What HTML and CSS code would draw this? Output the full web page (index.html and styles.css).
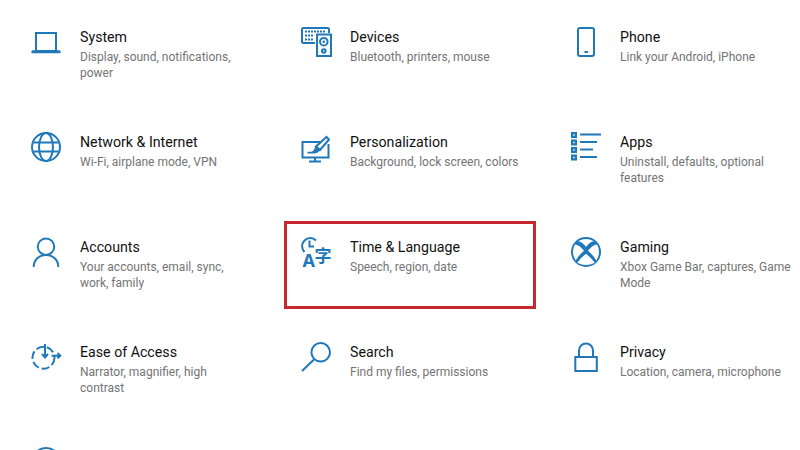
FILE: index.html
```html
<!DOCTYPE html>
<html lang="en">
<head>
<meta charset="utf-8">
<title>Windows Settings</title>
<link rel="stylesheet" href="styles.css">
</head>
<body>
<main class="grid">
  <section class="tile">
    <svg class="icon" viewBox="0 0 30 30"><rect class="s" x="5" y="6" width="20" height="18"/><path class="s thick" d="M1.800 24.700H28.200"/></svg>
    <div class="text"><h2>System</h2><p>Display, sound, notifications, power</p></div>
  </section>
  <section class="tile">
    <svg class="icon" viewBox="0 0 30 30"><path class="s" d="M14 16H2.500Q1 16 1 14.500V2.500Q1 1 2.500 1H26.500Q28 1 28 2.500V6"/><path class="d" d="M4 4.500H24M4 8.500H13M4 12.500H13"/><rect class="s" x="16" y="7.500" width="14" height="21.500"/><circle class="s" cx="22.800" cy="14.700" r="3.800"/><circle class="f" cx="22.800" cy="14.700" r="1.300"/><circle class="s" cx="22.800" cy="24" r="1.800"/></svg>
    <div class="text"><h2>Devices</h2><p>Bluetooth, printers, mouse</p></div>
  </section>
  <section class="tile">
    <svg class="icon" viewBox="0 0 30 30"><rect class="s" x="7" y="1" width="16" height="28" rx="2"/><path class="s" d="M13.500 25H17"/></svg>
    <div class="text"><h2>Phone</h2><p>Link your Android, iPhone</p></div>
  </section>

  <section class="tile">
    <svg class="icon" viewBox="0 0 30 30"><circle class="s" cx="15" cy="15" r="14"/><ellipse class="s" cx="15" cy="15" rx="7" ry="14"/><path class="s" d="M2.500 10.500H27.500M2.500 19.500H27.500"/></svg>
    <div class="text"><h2>Network &amp; Internet</h2><p>Wi-Fi, airplane mode, VPN</p></div>
  </section>
  <section class="tile">
    <svg class="icon" viewBox="0 0 30 30"><path class="s" d="M19 10H1.500V25.500H27.500V12"/><path class="s" d="M8 29.500H20M14 26V29"/><path class="s" d="M25.500 5L28 7.500L19 18L15 14.500Z"/><path class="f" d="M14.500 14.500L19 18.500Q16.500 21.500 13 21.500H6.500V19.800H10.500Q13 19 14.500 14.500Z"/></svg>
    <div class="text"><h2>Personalization</h2><p>Background, lock screen, colors</p></div>
  </section>
  <section class="tile">
    <svg class="icon" viewBox="0 0 30 30"><path class="f" d="M0 0H6V6H0ZM0 7.500H6V13.500H0ZM0 15H6V21H0ZM0 22.500H6V28.500H0Z"/><path class="w" d="M2.300 2.300h1.400v1.400H2.300ZM2.300 9.800h1.400v1.400H2.300ZM2.300 17.300h1.400v1.400H2.300ZM2.300 24.800h1.400v1.400H2.300Z"/><path class="s" d="M9 2.500H30M9 10H26M9 17.500H22M9 25H26"/></svg>
    <div class="text"><h2>Apps</h2><p>Uninstall, defaults, optional features</p></div>
  </section>

  <section class="tile">
    <svg class="icon" viewBox="0 0 30 30"><circle class="s" cx="15" cy="9.700" r="8.200"/><path class="s" d="M2.700 30C2.700 23 8 17.900 15 17.900S27.300 23 27.300 30"/></svg>
    <div class="text"><h2>Accounts</h2><p>Your accounts, email, sync, work, family</p></div>
  </section>
  <section class="tile">
    <svg class="icon" viewBox="0 0 30 30"><path class="s" d="M15 3.500A8 8 0 1 0 3.500 15"/><path class="s" d="M8.500 3.500V9.500H13"/><text class="glyph latin" x="1.500" y="29.700">A</text><text class="glyph cjk" x="13.500" y="25">字</text></svg>
    <div class="text"><h2>Time &amp; Language</h2><p>Speech, region, date</p></div>
  </section>
  <section class="tile">
    <svg class="icon" viewBox="0 0 30 30"><circle class="f" cx="15" cy="15" r="15"/><path class="w" d="M7 4.300Q11.500 5 15 10Q18.500 5 23 4.300Q19 2 15 2Q11 2 7 4.300ZM4 7.500Q8.500 8 13 13.800Q7 19 4.700 23.500Q2 19.500 2 15Q2 10.500 4 7.500ZM26 7.500Q21.500 8 17 13.800Q23 19 25.300 23.500Q28 19.500 28 15Q28 10.500 26 7.500ZM15 16.700Q20.500 21 23.800 25.700Q19.500 28 15 28Q10.500 28 6.200 25.700Q9.500 21 15 16.700Z"/></svg>
    <div class="text"><h2>Gaming</h2><p>Xbox Game Bar, captures, Game Mode</p></div>
  </section>

  <section class="tile">
    <svg class="icon" viewBox="0 0 30 30"><circle class="s dash" cx="12.500" cy="15.700" r="11"/><path class="s" d="M14 2V15M11 12L14 15.500L17 12"/><path class="s" d="M20.500 13.700H29M26.500 11L29.300 13.700L26.500 16.400"/></svg>
    <div class="text"><h2>Ease of Access</h2><p>Narrator, magnifier, high contrast</p></div>
  </section>
  <section class="tile">
    <svg class="icon" viewBox="0 0 30 30"><circle class="s" cx="19.700" cy="10.300" r="9.300"/><path class="s" d="M13 17.500L1 29"/></svg>
    <div class="text"><h2>Search</h2><p>Find my files, permissions</p></div>
  </section>
  <section class="tile">
    <svg class="icon" viewBox="0 0 30 30"><rect class="s" x="4.300" y="15" width="21.500" height="14"/><path class="s" d="M8 15V8.500A7 7 0 0 1 22 8.500V15"/></svg>
    <div class="text"><h2>Privacy</h2><p>Location, camera, microphone</p></div>
  </section>

  <section class="tile">
    <svg class="icon" viewBox="0 0 30 30"><circle class="s" cx="15" cy="15" r="14"/></svg>
  </section>
</main>
<div class="highlight"></div>
</body>
</html>
```
FILE: styles.css
```css
html, body {
  margin: 0;
  width: 800px;
  height: 450px;
  overflow: hidden;
  background: #fff;
}
body { position: relative; font-family: Roboto, "Noto Sans", sans-serif; }
.grid {
  box-sizing: border-box;
  height: 450px;
  overflow: hidden;
  display: grid;
  grid-template-columns: 270px 270px 229px;
  grid-auto-rows: 105px;
  padding: 27px 0 0 31px;
}
.tile { display: flex; gap: 19px; align-items: flex-start; }
.icon { width: 30px; height: 30px; flex: none; overflow: visible; }
.text { width: 172px; flex: none; }
h2 { margin: 0; font-size: 14.200px; font-weight: 400; line-height: 20px; color: #111; }
p { margin: 2px 0 0; font-size: 12px; line-height: 16px; color: #747474; }
.s { fill: none; stroke: #1f78b9; stroke-width: 2; }
.thick { stroke-width: 3; stroke-linecap: round; }
.d { fill: none; stroke: #1f78b9; stroke-width: 2; stroke-dasharray: 2 1; }
.f { fill: #1f78b9; }
.w { fill: #fff; }
.dash { stroke-dasharray: 8 3; }
.glyph { fill: #1f78b9; font-weight: 700; }
.latin { font-family: "Noto Sans", sans-serif; font-size: 18px; }
.cjk { font-family: "Noto Sans CJK SC", sans-serif; font-size: 17px; }
.highlight {
  position: absolute;
  left: 284px;
  top: 221px;
  width: 246px;
  height: 82px;
  border: 3px solid #c5282f;
}
```
